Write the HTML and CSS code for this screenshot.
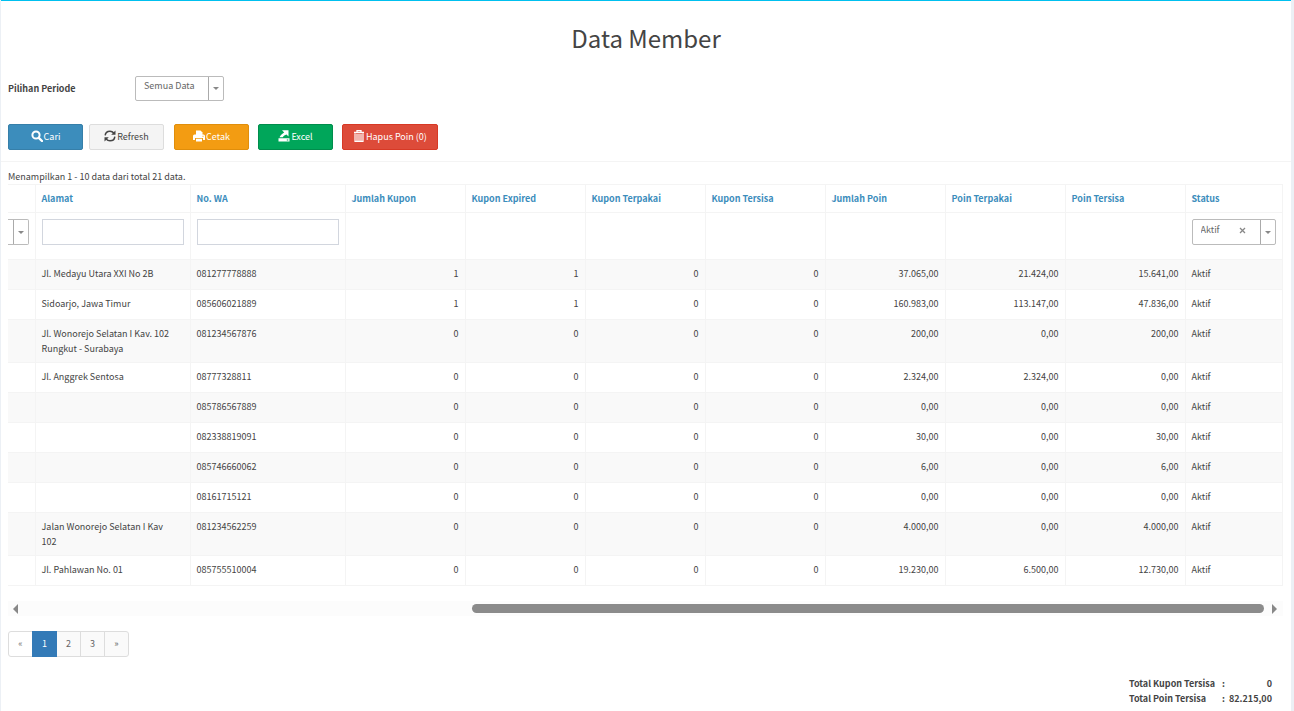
FILE: index.html
```html
<!DOCTYPE html>
<html lang="id">
<head>
    <meta charset="UTF-8">
    <meta name="viewport" content="width=device-width, initial-scale=1.0">
    <title>Data Member</title>
    <link rel="stylesheet" href="styles.css">
</head>

<body>

    <div class="box">
        <form class="filter-form">
            <h1>Data Member</h1>

            <div class="form-row">
                <label for="periode">Pilihan Periode</label>
                <span class="select-box periode-box">
                    <select id="periode">
                        <option>Semua Data</option>
                    </select>
                    <span class="arrow"></span>
                </span>
            </div>

            <div class="buttons">
                <button type="button" class="btn btn-primary">
                    <svg width="12" height="12" viewBox="0 0 12 12"><circle cx="5" cy="5" r="3.6" fill="none" stroke="currentColor" stroke-width="2"/><path d="M7.8 7.8L11 11" stroke="currentColor" stroke-width="2.4" stroke-linecap="round"/></svg>
                    Cari
                </button>
                <button type="button" class="btn btn-default">
                    <svg width="12" height="12" viewBox="0 0 12 12"><path d="M1.2 5.4C1.4 2.8 3.4 1.2 6 1.2c1.5 0 2.9.7 3.8 1.8M10.8 6.6C10.6 9.2 8.6 10.8 6 10.8c-1.5 0-2.9-.7-3.8-1.8" fill="none" stroke="currentColor" stroke-width="1.5"/><path d="M11.5.5v4.3H7.2zM.5 11.5V7.2h4.3z" fill="currentColor"/></svg>
                    Refresh
                </button>
                <button type="button" class="btn btn-warning">
                    <svg width="12" height="12" viewBox="0 0 12 12"><path d="M3 .5h4.500L9.500 2.500V5H3z" fill="currentColor"/><path fill-rule="evenodd" d="M1.500 4.500h9A1.500 1.500 0 0 1 12 6v4h-2V8H2v2H0V6a1.500 1.500 0 0 1 1.500-1.500zM9.500 5.700v1h1v-1zM3 8.800h6v2.700H3z" fill="currentColor"/></svg>
                    Cetak
                </button>
                <button type="button" class="btn btn-success">
                    <svg width="12" height="12" viewBox="0 0 12 12"><path d="M4 .3h6.500v6.200L8.500 4.600C6.800 5 5.600 6 4.800 7.300H1.500C2.600 5.300 4.200 3.700 6.200 2.500zM.5 8.200h11v3.300H.5zM8.800 9.500v1h1.500v-1z" fill="currentColor" fill-rule="evenodd"/></svg>
                    Excel
                </button>
                <button type="button" class="btn btn-danger">
                    <svg width="12" height="12" viewBox="0 0 12 12"><path d="M1 2.500h10M4 2V.7h4V2" fill="none" stroke="currentColor" stroke-width="1.300"/><path d="M2 3.500v8h8v-8M4 4v7M6 4v7M8 4v7M2 11.300h8" fill="none" stroke="currentColor" stroke-width="1.200"/></svg>
                    Hapus Poin (0)
                </button>
            </div>
        </form>

        <div class="content">
            <div class="summary">Menampilkan 1 - 10 data dari total 21 data.</div>

            <table class="grid">
                <colgroup>
                    <col class="col-cut">
                    <col class="col-text">
                    <col class="col-text">
                    <col class="col-num" span="7">
                    <col>
                </colgroup>
                <thead>
                    <tr>
                        <th></th>
                        <th><a href="#">Alamat</a></th>
                        <th><a href="#">No. WA</a></th>
                        <th><a href="#">Jumlah Kupon</a></th>
                        <th><a href="#">Kupon Expired</a></th>
                        <th><a href="#">Kupon Terpakai</a></th>
                        <th><a href="#">Kupon Tersisa</a></th>
                        <th><a href="#">Jumlah Poin</a></th>
                        <th><a href="#">Poin Terpakai</a></th>
                        <th><a href="#">Poin Tersisa</a></th>
                        <th><a href="#">Status</a></th>
                    </tr>
                    <tr class="filters">
                        <td class="cut">
                            <span class="select-box cut-box">
                                <select aria-label="Filter"><option></option></select>
                                <span class="arrow"></span>
                            </span>
                        </td>
                        <td><input type="text" aria-label="Alamat"></td>
                        <td><input type="text" aria-label="No. WA"></td>
                        <td></td>
                        <td></td>
                        <td></td>
                        <td></td>
                        <td></td>
                        <td></td>
                        <td></td>
                        <td>
                            <span class="select-box status-box">
                                <select aria-label="Status">
                                    <option>Aktif</option>
                                </select>
                                <button type="button" class="clear" aria-label="Hapus">
                                    <svg width="7" height="7" viewBox="0 0 7 7"><path d="M1 1l5 5M6 1L1 6" stroke="currentColor" stroke-width="1.300"/></svg>
                                </button>
                                <span class="arrow"></span>
                            </span>
                        </td>
                    </tr>
                </thead>
                <tbody>
                    <tr><td></td><td>Jl. Medayu Utara XXI No 2B</td><td>081277778888</td><td class="num">1</td><td class="num">1</td><td class="num">0</td><td class="num">0</td><td class="num">37.065,00</td><td class="num">21.424,00</td><td class="num">15.641,00</td><td>Aktif</td></tr>
                    <tr><td></td><td>Sidoarjo, Jawa Timur</td><td>085606021889</td><td class="num">1</td><td class="num">1</td><td class="num">0</td><td class="num">0</td><td class="num">160.983,00</td><td class="num">113.147,00</td><td class="num">47.836,00</td><td>Aktif</td></tr>
                    <tr><td></td><td>Jl. Wonorejo Selatan I Kav. 102<br>Rungkut - Surabaya</td><td>081234567876</td><td class="num">0</td><td class="num">0</td><td class="num">0</td><td class="num">0</td><td class="num">200,00</td><td class="num">0,00</td><td class="num">200,00</td><td>Aktif</td></tr>
                    <tr><td></td><td>Jl. Anggrek Sentosa</td><td>08777328811</td><td class="num">0</td><td class="num">0</td><td class="num">0</td><td class="num">0</td><td class="num">2.324,00</td><td class="num">2.324,00</td><td class="num">0,00</td><td>Aktif</td></tr>
                    <tr><td></td><td></td><td>085786567889</td><td class="num">0</td><td class="num">0</td><td class="num">0</td><td class="num">0</td><td class="num">0,00</td><td class="num">0,00</td><td class="num">0,00</td><td>Aktif</td></tr>
                    <tr><td></td><td></td><td>082338819091</td><td class="num">0</td><td class="num">0</td><td class="num">0</td><td class="num">0</td><td class="num">30,00</td><td class="num">0,00</td><td class="num">30,00</td><td>Aktif</td></tr>
                    <tr><td></td><td></td><td>085746660062</td><td class="num">0</td><td class="num">0</td><td class="num">0</td><td class="num">0</td><td class="num">6,00</td><td class="num">0,00</td><td class="num">6,00</td><td>Aktif</td></tr>
                    <tr><td></td><td></td><td>08161715121</td><td class="num">0</td><td class="num">0</td><td class="num">0</td><td class="num">0</td><td class="num">0,00</td><td class="num">0,00</td><td class="num">0,00</td><td>Aktif</td></tr>
                    <tr><td></td><td>Jalan Wonorejo Selatan I Kav<br>102</td><td>081234562259</td><td class="num">0</td><td class="num">0</td><td class="num">0</td><td class="num">0</td><td class="num">4.000,00</td><td class="num">0,00</td><td class="num">4.000,00</td><td>Aktif</td></tr>
                    <tr><td></td><td>Jl. Pahlawan No. 01</td><td>085755510004</td><td class="num">0</td><td class="num">0</td><td class="num">0</td><td class="num">0</td><td class="num">19.230,00</td><td class="num">6.500,00</td><td class="num">12.730,00</td><td>Aktif</td></tr>
                </tbody>
            </table>

            <div class="scrollbar">
                <span class="scroll-left"></span>
                <div class="track"><div class="thumb"></div></div>
                <span class="scroll-right"></span>
            </div>

            <nav class="pagination">
                <span class="disabled">&laquo;</span>
                <a href="#" class="active">1</a>
                <a href="#">2</a>
                <a href="#">3</a>
                <a href="#">&raquo;</a>
            </nav>

            <table class="totals">
                <tr><th>Total Kupon Tersisa</th><td>:</td><td class="num">0</td></tr>
                <tr><th>Total Poin Tersisa</th><td>:</td><td class="num">82.215,00</td></tr>
            </table>
        </div>
    </div>

</body>
</html>
```
FILE: styles.css
```css
* {
    box-sizing: border-box;
}

body {
    margin: 0;
    background-color: #ecf0f5;
    color: #444;
    font-family: "Noto Sans CJK JP", "Noto Sans", sans-serif;
    font-size: 9px;
    line-height: 15px;
}

a {
    color: #3c8dbc;
    text-decoration: none;
}

input, select, button {
    font: inherit;
    color: inherit;
}

/* White page box */
.box {
    margin: 0 3px 0 1px;
    min-height: 100vh;
    background-color: white;
    border-top: 1px solid #00c0ef;
}

.filter-form {
    padding: 19px 7px 11px;
    border-bottom: 1px solid #f4f4f4;
}

h1 {
    margin: 0 0 20px;
    font-size: 24px;
    font-weight: normal;
    line-height: 36px;
    text-align: center;
}

.form-row {
    display: flex;
    align-items: center;
    margin-bottom: 23px;
}

.form-row label {
    width: 127px;
    font-weight: bold;
}

/* Drop-downs */
.select-box {
    position: relative;
    display: flex;
    height: 25px;
    border: 1px solid #bbb;
    border-radius: 2px;
    background-color: white;
}

.select-box select {
    flex: 1;
    min-width: 0;
    padding: 0 0 6px 8px;
    border: 0;
    background: none;
    appearance: none;
    color: #666;
}

.arrow {
    display: flex;
    align-items: center;
    justify-content: center;
    width: 15px;
    border-left: 1px solid #aaa;
    pointer-events: none;
}

.arrow::after {
    content: "";
    border: 3px solid transparent;
    border-top-color: #888;
    border-bottom: 0;
}

.periode-box {
    width: 89px;
}

.status-box {
    height: 26px;
}

.clear {
    width: 35px;
    padding: 0 0 3px;
    border: 0;
    background: none;
    color: #888;
}

/* Buttons */
.buttons {
    display: flex;
    gap: 9px;
}

.btn {
    display: flex;
    align-items: center;
    justify-content: center;
    gap: 1px;
    min-width: 75px;
    height: 26px;
    padding: 0 10px 2px;
    border: 1px solid;
    border-radius: 2px;
    color: white;
}

.btn-primary {
    background-color: #3c8dbc;
    border-color: #367fa9;
}

.btn-default {
    margin: 0 1px 0 -3px;
    background-color: #f4f4f4;
    border-color: #ddd;
    color: #444;
}

.btn-warning {
    background-color: #f39c12;
    border-color: #e08e0b;
}

.btn-success {
    background-color: #00a65a;
    border-color: #008d4c;
}

.btn-danger {
    background-color: #dd4b39;
    border-color: #d73925;
}

.content {
    padding: 7px 7px 5px;
}

/* Member table */
.grid {
    width: calc(100% - 1px);
    table-layout: fixed;
    border-collapse: collapse;
}

.col-cut {
    width: 27px;
}

.col-text {
    width: 155px;
}

.col-num {
    width: 120px;
}

.grid th, .grid td {
    padding: 6px;
    border: 1px solid #f4f4f4;
    text-align: left;
    vertical-align: top;
}

.grid th:first-child, .grid td:first-child {
    border-left: 0;
}

.grid tbody td {
    height: 30px;
}

.grid tbody tr:nth-child(odd) {
    background-color: #f9f9f9;
}

.grid .filters td {
    height: 47px;
}

.grid input {
    display: block;
    width: 100%;
    height: 26px;
    border: 1px solid #d2d6de;
}

.grid .num {
    text-align: right;
}

.grid .cut {
    padding-left: 0;
}

.cut-box {
    height: 26px;
    border-left: 0;
    border-radius: 0 2px 2px 0;
}

.cut-box select {
    padding: 0;
}

/* Horizontal scrollbar */
.scrollbar {
    display: flex;
    align-items: center;
    gap: 8px;
    width: calc(100% - 1px);
    height: 15px;
    margin-top: 15px;
    padding: 0 6px 0 5px;
    background-color: #fcfcfc;
}

.scroll-left, .scroll-right {
    border: 5px solid transparent;
}

.scroll-left {
    border-right-color: #888;
    border-left: 0;
}

.scroll-right {
    border-left-color: #888;
    border-right: 0;
}

.track {
    flex: 1;
}

.thumb {
    width: 64%;
    height: 9px;
    margin-left: auto;
    border-radius: 5px;
    background-color: #8b8b8b;
}

/* Paging */
.pagination {
    display: flex;
    margin: 15px 0 19px;
}

.pagination a, .pagination span {
    width: 25px;
    height: 26px;
    margin-right: -1px;
    border: 1px solid #ddd;
    background-color: #fafafa;
    color: #666;
    line-height: 24px;
    text-align: center;
}

.pagination .disabled {
    background-color: white;
    border-radius: 3px 0 0 3px;
    color: #777;
}

.pagination .active {
    position: relative;
    background-color: #337ab7;
    border-color: #337ab7;
    color: white;
}

.pagination a:last-child {
    border-radius: 0 3px 3px 0;
}

/* Totals */
.totals {
    margin: 0 12px 0 auto;
    border-collapse: collapse;
    font-weight: bold;
}

.totals th, .totals td {
    padding: 0;
    text-align: left;
}

.totals th {
    width: 93px;
}

.totals td + td {
    padding-left: 4px;
    text-align: right;
}
```
